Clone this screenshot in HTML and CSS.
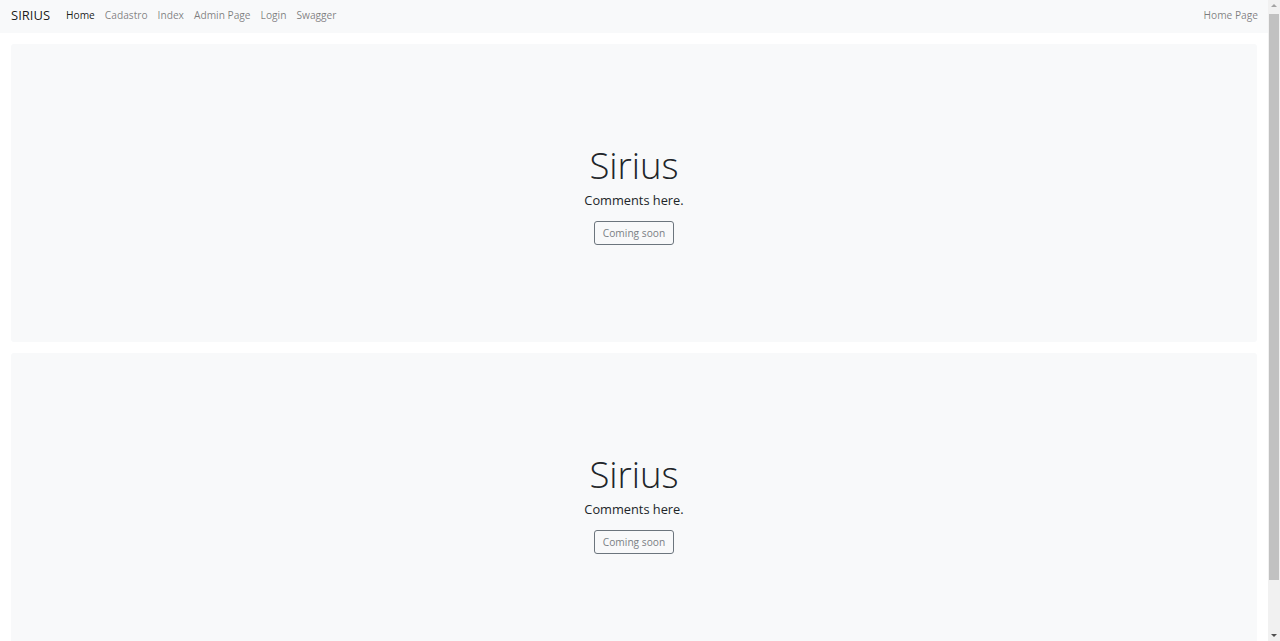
FILE: index.html
```html
<!DOCTYPE html>
<html lang="en">
<head>
<meta charset="utf-8">
<title>Sirius</title>
<link rel="stylesheet" href="styles.css">
</head>
<body>
<div class="page">
<nav class="navbar">
  <a class="brand" href="#">SIRIUS</a>
  <ul class="nav">
    <li><a class="nav-link active" href="#">Home</a></li>
    <li><a class="nav-link" href="#">Cadastro</a></li>
    <li><a class="nav-link" href="#">Index</a></li>
    <li><a class="nav-link" href="#">Admin Page</a></li>
    <li><a class="nav-link" href="#">Login</a></li>
    <li><a class="nav-link" href="#">Swagger</a></li>
  </ul>
  <a class="nav-link right" href="#">Home Page</a>
</nav>
<main class="content">
  <section class="jumbo">
    <h1 class="title">Sirius</h1>
    <p class="lead">Comments here.</p>
    <button class="btn">Coming soon</button>
  </section>
  <section class="jumbo">
    <h1 class="title">Sirius</h1>
    <p class="lead">Comments here.</p>
    <button class="btn">Coming soon</button>
  </section>
</main>
</div>
<div class="fake-scrollbar" aria-hidden="true">
  <span class="arrow up"></span>
  <span class="thumb"></span>
  <span class="arrow down"></span>
</div>
</body>
</html>
```
FILE: styles.css
```css
body {
  margin: 0;
  background: #fff;
  font-family: "Open Sans", "Noto Sans", sans-serif;
  color: #212529;
}
.page { margin-right: 12px; }
a { text-decoration: none; }

.navbar {
  height: 33px;
  box-sizing: border-box;
  padding: 0 10px 3px 11px;
  background: #f8f9fa;
  display: flex;
  align-items: center;
}
.brand {
  font-size: 13px;
  color: rgba(0,0,0,.9);
  margin-right: 11px;
}
.nav {
  list-style: none;
  margin: 0;
  padding: 0;
  display: flex;
  flex: 1;
}
.nav-link {
  display: block;
  font-size: 10.2px;
  color: rgba(0,0,0,.5);
  padding: 0 5px;
}
.nav-link.active { color: rgba(0,0,0,.9); }
.nav-link.right { padding-right: 0; }

.content {
  padding: 11px 11px 40px;
  display: flex;
  flex-direction: column;
  gap: 11px;
}
.jumbo {
  height: 298px;
  background: #f8f9fa;
  border-radius: 3px;
  display: flex;
  flex-direction: column;
  align-items: center;
  justify-content: center;
  padding-top: 4px;
  box-sizing: border-box;
}
.title {
  margin: 0;
  font-size: 36.5px;
  font-weight: 300;
  line-height: 1.15;
}
.lead {
  margin: 4px 0 12px;
  font-size: 12.8px;
}
.btn {
  font-family: inherit;
  font-size: 10.2px;
  color: #7a7f85;
  background: transparent;
  border: 1px solid #6c757d;
  border-radius: 3px;
  padding: 4px 8px;
  line-height: 1.45;
}

.fake-scrollbar {
  position: fixed;
  top: 0;
  right: 0;
  bottom: 0;
  width: 12px;
  background: #f1f1f1;
  display: flex;
  flex-direction: column;
  align-items: center;
}
.arrow {
  width: 0;
  height: 0;
  border-left: 3px solid transparent;
  border-right: 3px solid transparent;
  margin: 4px 0;
}
.arrow.up { border-bottom: 3px solid #a3a3a3; }
.arrow.down { border-top: 3px solid #505050; }
.thumb {
  flex: 1;
  width: 10px;
  margin: 3px 0 50px;
  background: #c1c1c1;
}
```
